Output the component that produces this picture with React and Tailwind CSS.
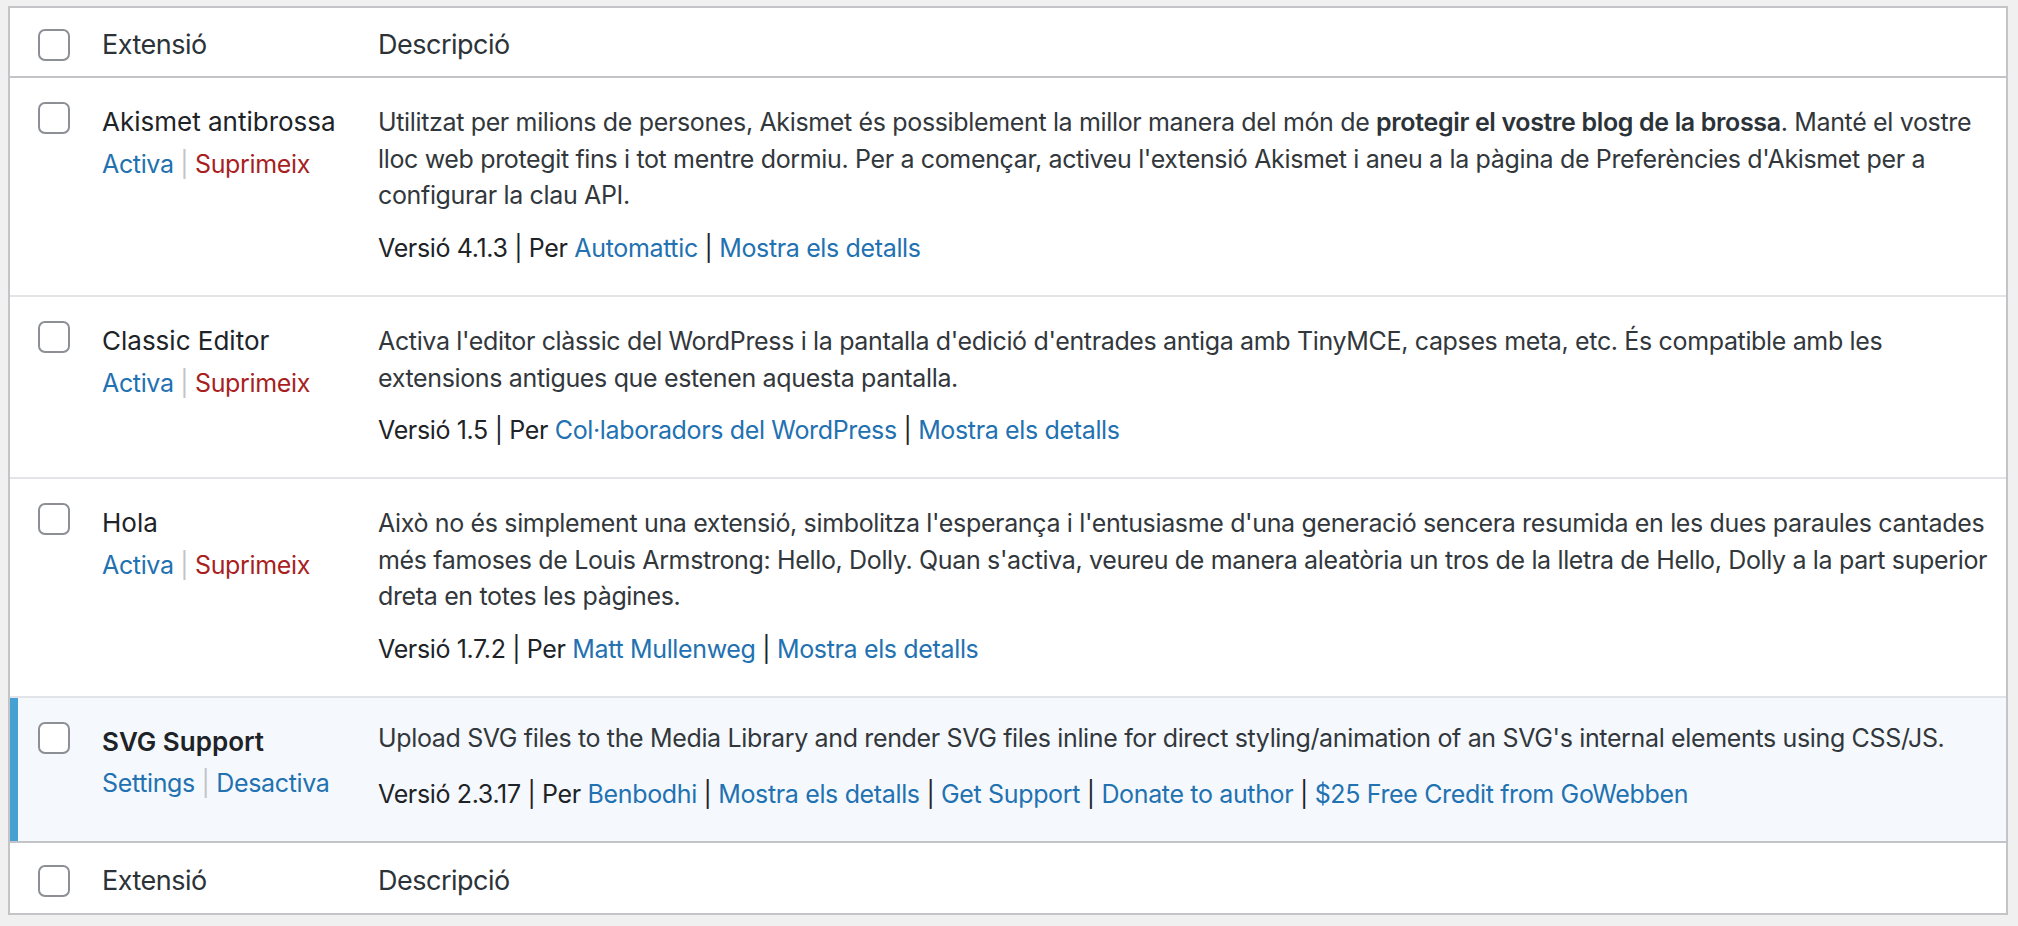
import React from 'react';

const font = { fontFamily: 'Inter, "Noto Sans", sans-serif' };

const plugins = [
  {
    name: 'Akismet antibrossa',
    actions: [
      { label: 'Activa', tone: 'link' },
      { label: 'Suprimeix', tone: 'delete' },
    ],
    lines: [
      <>
        Utilitzat per milions de persones, Akismet és possiblement la millor manera del món de{' '}
        <strong className="font-semibold text-[#2c3338]">protegir el vostre blog de la brossa</strong>. Manté el vostre
      </>,
      "lloc web protegit fins i tot mentre dormiu. Per a començar, activeu l'extensió Akismet i aneu a la pàgina de Preferències d'Akismet per a",
      'configurar la clau API.',
    ],
    version: '4.1.3',
    links: ['Automattic', 'Mostra els detalls'],
  },
  {
    name: 'Classic Editor',
    actions: [
      { label: 'Activa', tone: 'link' },
      { label: 'Suprimeix', tone: 'delete' },
    ],
    lines: [
      "Activa l'editor clàssic del WordPress i la pantalla d'edició d'entrades antiga amb TinyMCE, capses meta, etc. És compatible amb les",
      'extensions antigues que estenen aquesta pantalla.',
    ],
    version: '1.5',
    links: ['Col·laboradors del WordPress', 'Mostra els detalls'],
  },
  {
    name: 'Hola',
    actions: [
      { label: 'Activa', tone: 'link' },
      { label: 'Suprimeix', tone: 'delete' },
    ],
    lines: [
      "Això no és simplement una extensió, simbolitza l'esperança i l'entusiasme d'una generació sencera resumida en les dues paraules cantades",
      "més famoses de Louis Armstrong: Hello, Dolly. Quan s'activa, veureu de manera aleatòria un tros de la lletra de Hello, Dolly a la part superior",
      'dreta en totes les pàgines.',
    ],
    version: '1.7.2',
    links: ['Matt Mullenweg', 'Mostra els detalls'],
  },
  {
    name: 'SVG Support',
    active: true,
    actions: [
      { label: 'Settings', tone: 'link' },
      { label: 'Desactiva', tone: 'link' },
    ],
    lines: [
      "Upload SVG files to the Media Library and render SVG files inline for direct styling/animation of an SVG's internal elements using CSS/JS.",
    ],
    version: '2.3.17',
    links: ['Benbodhi', 'Mostra els detalls', 'Get Support', 'Donate to author', '$25 Free Credit from GoWebben'],
  },
];

const Checkbox = ({ className = '' }) => (
  <span className={`block w-[32px] h-[32px] rounded-[7px] border-2 border-[#8c8f94] bg-white ${className}`} />
);

const HeadRow = ({ border }) => (
  <div className={`flex items-center h-[70px] text-[27px] leading-[39px] tracking-[-0.5px] text-[#2c3338] ${border}`}>
    <div className="w-[72px] pl-[28px] shrink-0">
      <Checkbox className="mt-[6px]" />
    </div>
    <div className="w-[276px] pl-[20px] pt-[5px] shrink-0">Extensió</div>
    <div className="flex-1 pl-[20px] pt-[5px]">Descripció</div>
  </div>
);

const PluginRow = ({ p, last }) => (
  <div
    className={`flex text-[25px] leading-[36.7px] tracking-[-0.35px] ${last ? 'border-b-2 border-[#c3c4c7]' : 'border-b-2 border-[#e2e4e7]'} ${
      p.active ? 'bg-[#f5f9fd]' : 'bg-white'
    }`}
  >
    <div className={`w-[72px] shrink-0 pt-[24px] ${p.active ? 'border-l-8 border-[#45a0d4] pl-[20px]' : 'pl-[28px]'}`}>
      <Checkbox />
    </div>
    <div className="w-[276px] shrink-0 pl-[20px] pt-[26px]">
      <div className={`text-[26px] tracking-normal text-[#1d2327] ${p.active ? 'font-semibold' : ''}`}>{p.name}</div>
      <div className="mt-[5px] whitespace-nowrap">
        {p.actions.map((a, i) => (
          <span key={a.label}>
            {i > 0 && <span className="text-[#c3c4c7]"> | </span>}
            <a className={a.tone === 'delete' ? 'text-[#a81f1f]' : 'text-[#2271b1]'}>{a.label}</a>
          </span>
        ))}
      </div>
    </div>
    <div className={`flex-1 pl-[20px] pr-[20px] pb-[28px] ${p.active ? 'pt-[22px]' : 'pt-[26px]'}`}>
      <div className="text-[#32373c]">
        {p.lines.map((l, i) => (
          <div key={i} className="whitespace-nowrap">
            {l}
          </div>
        ))}
      </div>
      <div className={`text-[#1d2327] whitespace-nowrap ${p.active ? 'mt-[20px]' : 'mt-[16px]'}`}>
        Versió {p.version} | Per{' '}
        {p.links.map((l, i) => (
          <span key={l}>
            {i > 0 && ' | '}
            <a className="text-[#2271b1]">{l}</a>
          </span>
        ))}
      </div>
    </div>
  </div>
);

export default function App() {
  return (
    <div className="min-h-screen bg-[#f0f0f1] pt-[6px] pl-[8px] pr-[10px]" style={font}>
      <div className="border-2 border-[#c3c4c7] bg-white">
        <HeadRow border="border-b-2 border-[#c3c4c7]" />
        {plugins.map((p, i) => (
          <PluginRow key={p.name} p={p} last={i === plugins.length - 1} />
        ))}
        <HeadRow border="" />
      </div>
    </div>
  );
}
